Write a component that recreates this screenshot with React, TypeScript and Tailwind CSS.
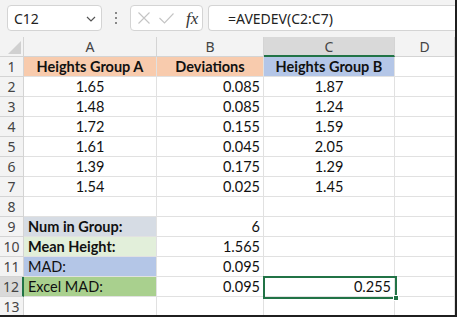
import React from "react";

const cols = ["A", "B", "C", "D"];

type Cell = { v?: string; bold?: boolean; align?: "l" | "c" | "r"; bg?: string };

const rows: Cell[][] = [
	[
		{ v: "Heights Group A", bold: true, align: "c", bg: "bg-[#f8cbad]" },
		{ v: "Deviations", bold: true, align: "c", bg: "bg-[#f8cbad]" },
		{ v: "Heights Group B", bold: true, align: "c", bg: "bg-[#b4c6e7]" },
		{},
	],
	[{ v: "1.65", align: "c" }, { v: "0.085", align: "r" }, { v: "1.87", align: "c" }, {}],
	[{ v: "1.48", align: "c" }, { v: "0.085", align: "r" }, { v: "1.24", align: "c" }, {}],
	[{ v: "1.72", align: "c" }, { v: "0.155", align: "r" }, { v: "1.59", align: "c" }, {}],
	[{ v: "1.61", align: "c" }, { v: "0.045", align: "r" }, { v: "2.05", align: "c" }, {}],
	[{ v: "1.39", align: "c" }, { v: "0.175", align: "r" }, { v: "1.29", align: "c" }, {}],
	[{ v: "1.54", align: "c" }, { v: "0.025", align: "r" }, { v: "1.45", align: "c" }, {}],
	[{}, {}, {}, {}],
	[{ v: "Num in Group:", bold: true, align: "l", bg: "bg-[#d6dce4]" }, { v: "6", align: "r" }, {}, {}],
	[{ v: "Mean Height:", bold: true, align: "l", bg: "bg-[#e2efda]" }, { v: "1.565", align: "r" }, {}, {}],
	[{ v: "MAD:", align: "l", bg: "bg-[#b4c6e7]" }, { v: "0.095", align: "r" }, {}, {}],
	[{ v: "Excel MAD:", align: "l", bg: "bg-[#a9d08e]" }, { v: "0.095", align: "r" }, { v: "0.255", align: "r" }, {}],
	[{}, {}, {}, {}],
];

const alignCls = { l: "justify-start pl-[4px]", c: "justify-center", r: "justify-end pr-[3px]" };

export default function App() {
	return (
		<div className="w-[457px] h-[317px] bg-[#f3f3f3] border-r-2 border-b-2 border-[#1f1f1f] overflow-hidden relative font-['Lato',sans-serif] text-[#111]">
			{/* formula bar */}
			<div className="flex items-center h-[37px] pl-[7px] pb-[6px] pt-[5px] font-['Noto_Sans',sans-serif]">
				<div className="w-[95px] h-[26px] bg-white border border-[#d4d4d4] rounded-[4px] flex items-center justify-between pl-[6px] pr-[4px] text-[14px] text-[#222]">
					<span>C12</span>
					<svg width="12" height="12" viewBox="0 0 12 12" className="mt-[1px]">
						<path d="M2 4 L6 8 L10 4" fill="none" stroke="#555" strokeWidth="1.2" />
					</svg>
				</div>
				<div className="w-[28px] flex flex-col items-center gap-[3px]">
					<div className="w-[2px] h-[2px] bg-[#888]" />
					<div className="w-[2px] h-[2px] bg-[#888]" />
					<div className="w-[2px] h-[2px] bg-[#888]" />
				</div>
				<div className="w-[73px] h-[26px] bg-white border border-[#d4d4d4] rounded-[4px] flex items-center pl-[7px] gap-[9px]">
					<svg width="12" height="12" viewBox="0 0 12 12">
						<path d="M0.5 0.5 L11.5 11.5 M11.5 0.5 L0.5 11.5" stroke="#c4c4c4" strokeWidth="1.1" />
					</svg>
					<svg width="15" height="11" viewBox="0 0 15 11">
						<path d="M0.5 5 L5.5 10 L14.5 0.5" fill="none" stroke="#c4c4c4" strokeWidth="1.1" />
					</svg>
					<span className="font-['Liberation_Serif',serif] italic text-[17px] text-[#333] leading-none ml-[3px]">
						fx
					</span>
				</div>
				<div className="flex-1 h-[26px] ml-[5px] bg-white border border-[#d4d4d4] border-r-0 rounded-l-[4px] flex items-center pl-[19px] text-[14px] text-[#222]">
					=AVEDEV(C2:C7)
				</div>
			</div>

			{/* grid */}
			<div className="grid grid-cols-[24px_133px_107px_131px_1fr] bg-white">
				<div className="h-[20px] bg-[#f3f3f3] border-r border-b border-[#d4d4d4] flex items-end justify-end pr-[2px] pb-[2px]">
					<svg width="13" height="13" viewBox="0 0 13 13">
						<path d="M13 0 L13 13 L0 13 Z" fill="#d0d0d0" />
					</svg>
				</div>
				{cols.map((c) => (
					<div
						key={c}
						className={`h-[20px] flex items-center justify-center text-[14px] font-['Noto_Sans',sans-serif] text-[#444] border-r ${
							c === "C" ? "bg-[#d9d9d9] border-b-2 border-b-[#217346] border-r-[#d4d4d4]" : "bg-[#f3f3f3] border-b border-[#d4d4d4]"
						}`}
					>
						{c}
					</div>
				))}
				{rows.map((r, i) => (
					<React.Fragment key={i}>
						<div
							className={`h-[20px] flex items-center justify-center text-[14px] font-['Noto_Sans',sans-serif] text-[#444] border-b border-[#d4d4d4] ${
								i === 11 ? "bg-[#d9d9d9] border-r-2 border-r-[#217346]" : "bg-[#f3f3f3] border-r"
							}`}
						>
							{i + 1}
						</div>
						{r.map((cell, j) => (
							<div
								key={j}
								className={`h-[20px] flex items-center text-[14.5px] border-r border-b border-[#e1e1e1] whitespace-nowrap ${
									cell.bg ?? ""
								} ${cell.bold ? "font-bold" : ""} ${alignCls[cell.align ?? "l"]}`}
							>
								{cell.v}
							</div>
						))}
					</React.Fragment>
				))}
			</div>

			{/* selection C12 */}
			<div className="absolute left-[263px] top-[276px] w-[134px] h-[23px] border-2 border-[#217346]" />
			<div className="absolute left-[393px] top-[295px] w-[6px] h-[6px] bg-[#217346] border border-white" />
		</div>
	);
}
